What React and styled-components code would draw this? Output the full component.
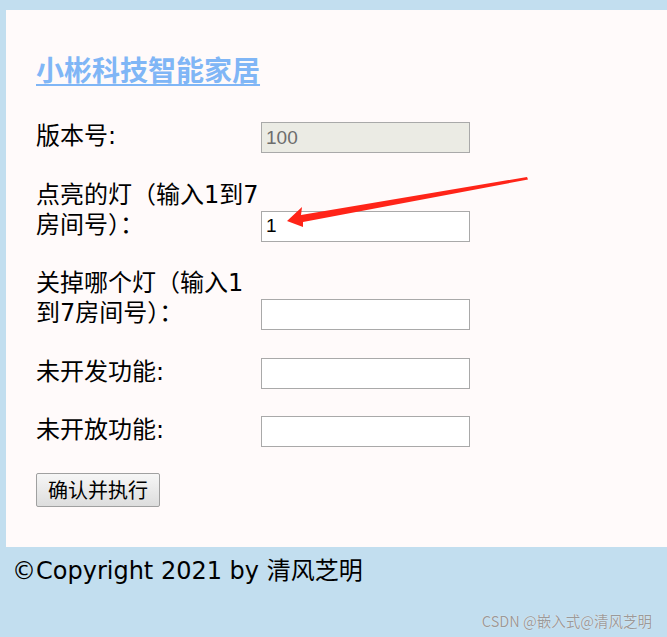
import styled, { createGlobalStyle } from 'styled-components';

const GlobalStyle = createGlobalStyle`
    html, body {
        margin: 0;
        padding: 0;
        background-color: #C2DEEF;
        font-family: 'DejaVu Sans', 'Noto Sans CJK SC', sans-serif;
        overflow: hidden;
    }
`

const fields = [
    { label: '版本号:', value: '100', disabled: true },
    { label: '点亮的灯（输入1到7房间号）：', value: '1' },
    { label: '关掉哪个灯（输入1到7房间号）：', value: '' },
    { label: '未开发功能:', value: '' },
    { label: '未开放功能:', value: '' },
];

function App() {
    return (
        <Page>
            <GlobalStyle />
            <Panel>
                <Title href="#">小彬科技智能家居</Title>
                <Form onSubmit={(e) => e.preventDefault()}>
                    {fields.map((f) => (
                        <Row key={f.label}>
                            <Label>{f.label}</Label>
                            <Input
                                type="text"
                                defaultValue={f.value}
                                disabled={f.disabled}
                            />
                        </Row>
                    ))}
                    <Button type="submit">确认并执行</Button>
                </Form>
            </Panel>
            <Footer>
                <Copy>©Copyright 2021 by 清风芝明</Copy>
                <Mark>CSDN @嵌入式@清风芝明</Mark>
            </Footer>
            <Arrow width="667" height="637" viewBox="0 0 667 637">
                <polygon
                    points="287,221 302,207 301,215 527,177 528,179.5 303,222 303,227"
                    fill="#FF2418"
                />
            </Arrow>
        </Page>
    );
}
export default App;

const Page = styled.div`
    position: relative;
    width: 667px;
    height: 637px;
    padding-top: 10px;
    box-sizing: border-box;
`

const Panel = styled.main`
    margin-left: 6px;
    background-color: #FFFAFA;
    padding: 45px 30px 40px;
    height: 537px;
    box-sizing: border-box;
`

const Title = styled.a`
    display: block;
    font-size: 28px;
    line-height: 34px;
    font-weight: 700;
    color: #80B6F6;
    text-decoration: underline;
    text-underline-offset: 3px;
    margin-bottom: 32px;
`

const Form = styled.form`
    display: flex;
    flex-direction: column;
    align-items: flex-start;
    gap: 26.5px;
`

const Row = styled.div`
    display: flex;
    align-items: flex-end;
`

const Label = styled.label`
    width: 225px;
    font-size: 24px;
    line-height: 30px;
    padding-bottom: 2px;
    color: #000;
`

const Input = styled.input`
    width: 209px;
    height: 31px;
    box-sizing: border-box;
    border: 1px solid #A9A9A9;
    background-color: #FFFFFF;
    padding: 0 4px;
    font-family: 'Liberation Sans', Arial, sans-serif;
    font-size: 19px;
    color: #000;
    outline: none;

    &:disabled {
        background-color: #EBEBE4;
        color: #6D6D6D;
    }
`

const Button = styled.button`
    margin-top: -1px;
    height: 34px;
    padding: 0 11px;
    border: 1px solid #A0A0A0;
    border-radius: 2px;
    background: linear-gradient(#F6F6F6, #DDDDDD);
    font-family: 'Noto Sans CJK SC', sans-serif;
    font-size: 20px;
    color: #000;
`

const Footer = styled.footer`
    display: flex;
    flex-direction: column;
    padding: 10px 15px 0 12px;
`

const Copy = styled.div`
    font-size: 24px;
    line-height: 28px;
    color: #000;
`

const Mark = styled.div`
    align-self: flex-end;
    margin-right: 0;
    margin-top: 26px;
    font-family: 'Noto Sans CJK SC', sans-serif;
    font-size: 14.5px;
    line-height: 20px;
    color: #9A9A9A;
    text-shadow: 0 0 1px #FFFFFF;
`

const Arrow = styled.svg`
    position: absolute;
    left: 0;
    top: 0;
    pointer-events: none;
`
